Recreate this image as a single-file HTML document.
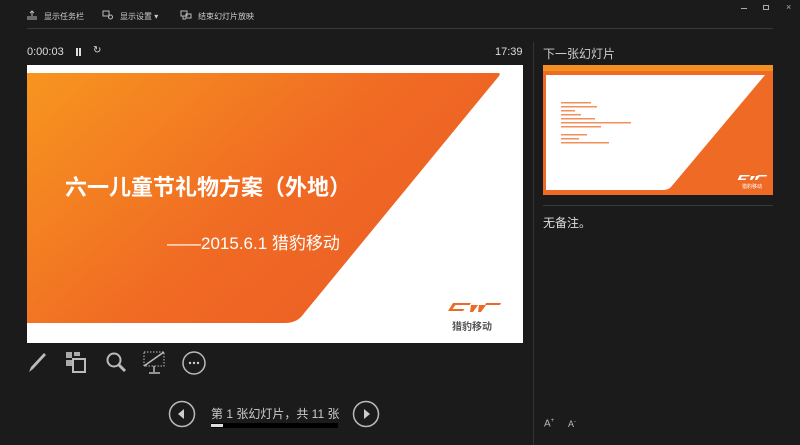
<!DOCTYPE html>
<html><head><meta charset="utf-8"><style>
*{margin:0;padding:0;box-sizing:border-box}
body{width:800px;height:445px;background:#1b1b1b;overflow:hidden;position:relative;font-family:"Liberation Sans","Noto Sans CJK SC",sans-serif;color:#ddd}
.a{position:absolute;white-space:nowrap}
.tb{font-size:8px;color:#ccc;top:11px}
</style></head><body>
<svg class="a" style="left:26px;top:10px" width="12" height="10" viewBox="0 0 12 10"><path d="M6 1v5M4 3l2-2 2 2M1 7h10M1 9h10" stroke="#bbb" fill="none"/></svg>
<div class="a tb" style="left:44px">显示任务栏</div>
<svg class="a" style="left:102px;top:10px" width="12" height="10" viewBox="0 0 12 10"><rect x="1" y="1" width="6" height="5" stroke="#bbb" fill="none"/><circle cx="8.5" cy="7" r="2" stroke="#bbb" fill="none"/></svg>
<div class="a tb" style="left:120px">显示设置 ▾</div>
<svg class="a" style="left:180px;top:10px" width="12" height="10" viewBox="0 0 12 10"><rect x="1" y="1" width="6" height="5" stroke="#bbb" fill="none"/><rect x="6" y="4" width="5" height="4" stroke="#bbb" fill="none"/><path d="M3 6v3h3" stroke="#bbb" fill="none"/></svg>
<div class="a tb" style="left:198px">结束幻灯片放映</div>
<div class="a" style="left:741px;top:8px;width:6px;height:1px;background:#aaa"></div>
<div class="a" style="left:763px;top:5px;width:6px;height:5px;border:1px solid #aaa"></div>
<div class="a" style="left:786px;top:2px;font-size:9px;color:#aaa">×</div>
<div class="a" style="left:27px;top:28px;width:746px;height:1px;background:#3a3a3a"></div>
<div class="a" style="left:27px;top:46px;font-size:11px;color:#ddd">0:00:03</div>
<div class="a" style="left:76px;top:48px;width:2px;height:8px;background:#ddd"></div>
<div class="a" style="left:79px;top:48px;width:2px;height:8px;background:#ddd"></div>
<div class="a" style="left:93px;top:45px;font-size:10px;color:#ddd">↻</div>
<div class="a" style="left:495px;top:46px;font-size:11px;color:#ddd">17:39</div>
<svg class="a" style="left:27px;top:65px" width="496" height="278" viewBox="0 0 496 278">
<defs><linearGradient id="g" x1="0" y1="0" x2="1" y2="0.6"><stop offset="0" stop-color="#f7951f"/><stop offset="0.6" stop-color="#f06a24"/><stop offset="1" stop-color="#ec5f24"/></linearGradient></defs>
<rect width="496" height="278" fill="#fff"/>
<path d="M0 8H471Q474 8 472 11L274 252Q268 258 258 258H0Z" fill="url(#g)"/>
<text x="38" y="130" font-size="22" font-weight="bold" fill="#fff" font-family="Liberation Sans,Noto Sans CJK SC,sans-serif">六一儿童节礼物方案（外地）</text>
<text x="140" y="184" font-size="17" fill="#fff" font-family="Liberation Sans,Noto Sans CJK SC,sans-serif">——2015.6.1 猎豹移动</text>
<g fill="#ec6a24">
<path d="M426 238h18l-1.5 2h-14l-3 4h12l-1.5 2h-15z"/>
<path d="M444 240h7l-5 7h-3zM452 240h7l-5 7h-3zM459 238h15l-1 2h-15z"/>
</g>
<text x="425" y="265" font-size="10" fill="#555" font-weight="bold" font-family="Noto Sans CJK SC,sans-serif">猎豹移动</text>
</svg>
<svg class="a" style="left:26px;top:350px" width="24" height="24" viewBox="0 0 24 24"><path d="M3 22l2-5 13-14 2 2-13 14z" fill="#bbb"/></svg>
<svg class="a" style="left:64px;top:350px" width="24" height="24" viewBox="0 0 24 24"><rect x="2" y="2" width="6" height="6" fill="#aaa"/><rect x="10" y="2" width="6" height="4" fill="#aaa"/><rect x="2" y="10" width="6" height="6" fill="#aaa"/><rect x="9" y="9" width="12" height="13" stroke="#bbb" stroke-width="2" fill="none"/></svg>
<svg class="a" style="left:104px;top:350px" width="24" height="24" viewBox="0 0 24 24"><circle cx="10" cy="10" r="6.5" stroke="#bbb" stroke-width="2" fill="none"/><path d="M15 15l6 6" stroke="#bbb" stroke-width="3"/></svg>
<svg class="a" style="left:142px;top:350px" width="26" height="26" viewBox="0 0 26 26"><rect x="2" y="2" width="20" height="14" stroke="#bbb" stroke-dasharray="1.5 1.5" fill="none"/><path d="M2 16L22 2M12 16v6M7 23h11" stroke="#bbb" stroke-width="1.5"/></svg>
<svg class="a" style="left:181px;top:350px" width="26" height="26" viewBox="0 0 26 26"><circle cx="13" cy="13" r="11" stroke="#bbb" stroke-width="1.5" fill="none"/><circle cx="9" cy="13" r="1.2" fill="#ccc"/><circle cx="13" cy="13" r="1.2" fill="#ccc"/><circle cx="17" cy="13" r="1.2" fill="#ccc"/></svg>
<svg class="a" style="left:168px;top:400px" width="28" height="28" viewBox="0 0 28 28"><circle cx="14" cy="14" r="12.5" stroke="#bbb" stroke-width="1.5" fill="none"/><path d="M16 9v10l-6-5z" fill="#ccc"/></svg>
<div class="a" style="left:211px;top:405px;font-size:12px;color:#ccc">第 1 张幻灯片，共 11 张</div>
<div class="a" style="left:211px;top:423px;width:127px;height:5px;background:#000"></div>
<div class="a" style="left:211px;top:424px;width:12px;height:3px;background:#ddd"></div>
<svg class="a" style="left:352px;top:400px" width="28" height="28" viewBox="0 0 28 28"><circle cx="14" cy="14" r="12.5" stroke="#bbb" stroke-width="1.5" fill="none"/><path d="M12 9v10l6-5z" fill="#ccc"/></svg>
<div class="a" style="left:533px;top:42px;width:1px;height:403px;background:#333"></div>
<div class="a" style="left:543px;top:45px;font-size:12px;color:#ccc">下一张幻灯片</div>
<svg class="a" style="left:543px;top:65px" width="230" height="130" viewBox="0 0 230 130">
<rect width="230" height="130" fill="#ef6a24"/>
<rect width="230" height="6" fill="#f49020"/>
<path d="M3 10H222L128 122Q125 125 120 125H3Z" fill="#fff"/>
<g fill="#ef6a24" opacity="0.75"><rect x="18" y="37" width="30" height="1.5"/><rect x="18" y="41" width="36" height="1.5"/><rect x="18" y="45" width="14" height="1.5"/><rect x="18" y="49" width="20" height="1.5"/><rect x="18" y="53" width="34" height="1.5"/><rect x="18" y="57" width="70" height="1.5"/><rect x="18" y="61" width="40" height="1.5"/><rect x="18" y="69" width="26" height="1.5"/><rect x="18" y="73" width="18" height="1.5"/><rect x="18" y="77" width="48" height="1.5"/></g>
<path d="M197 110h10l-1 1.5h-7l-1.5 2h6l-1 1.5h-8zM208 111h4l-3 4h-2zM213 111h4l-3 4h-2zM215 110h9l-.5 1.5h-9z" fill="#fff"/>
<text x="199" y="123" font-size="5" fill="#fff" font-family="Noto Sans CJK SC,sans-serif">猎豹移动</text>
</svg>
<div class="a" style="left:543px;top:205px;width:230px;height:1px;background:#3a3a3a"></div>
<div class="a" style="left:543px;top:214px;font-size:12px;color:#ddd">无备注。</div>
<div class="a" style="left:544px;top:418px;font-size:10px;color:#bbb">A<sup style="font-size:6px">+</sup></div>
<div class="a" style="left:568px;top:419px;font-size:9px;color:#bbb">A<sup style="font-size:6px">-</sup></div>
</body></html>
